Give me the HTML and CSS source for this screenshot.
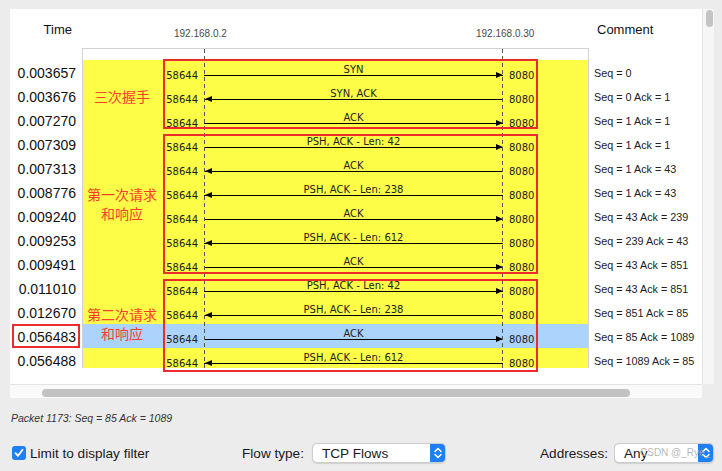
FILE: index.html
```html
<!DOCTYPE html>
<html>
<head>
<meta charset="utf-8">
<link rel="stylesheet" href="styles.css">
</head>
<body>
<div class="pane">
  <div class="view">
    <div class="col-time">
      <div class="head head-time">Time</div>
      <div class="times">
        <div class="t">0.003657</div>
        <div class="t">0.003676</div>
        <div class="t">0.007270</div>
        <div class="t">0.007309</div>
        <div class="t">0.007313</div>
        <div class="t">0.008776</div>
        <div class="t">0.009240</div>
        <div class="t">0.009253</div>
        <div class="t">0.009491</div>
        <div class="t">0.011010</div>
        <div class="t">0.012670</div>
        <div class="t">0.056483</div>
        <div class="t">0.056488</div>
      </div>
    </div>
    <div class="col-diagram">
      <div class="head head-ips"><span class="ip ip-a">192.168.0.2</span><span class="ip">192.168.0.30</span></div>
      <div class="canvas">
        <div class="node node-a"></div>
        <div class="node node-b"></div>
        <div class="row"><span class="port">58644</span><div class="msg"><span class="lbl">SYN</span><div class="arrow to-right"></div></div><span class="port port-r">8080</span></div>
        <div class="row"><span class="port">58644</span><div class="msg"><span class="lbl">SYN, ACK</span><div class="arrow to-left"></div></div><span class="port port-r">8080</span></div>
        <div class="row"><span class="port">58644</span><div class="msg"><span class="lbl">ACK</span><div class="arrow to-right"></div></div><span class="port port-r">8080</span></div>
        <div class="row"><span class="port">58644</span><div class="msg"><span class="lbl">PSH, ACK - Len: 42</span><div class="arrow to-right"></div></div><span class="port port-r">8080</span></div>
        <div class="row"><span class="port">58644</span><div class="msg"><span class="lbl">ACK</span><div class="arrow to-left"></div></div><span class="port port-r">8080</span></div>
        <div class="row"><span class="port">58644</span><div class="msg"><span class="lbl">PSH, ACK - Len: 238</span><div class="arrow to-left"></div></div><span class="port port-r">8080</span></div>
        <div class="row"><span class="port">58644</span><div class="msg"><span class="lbl">ACK</span><div class="arrow to-right"></div></div><span class="port port-r">8080</span></div>
        <div class="row"><span class="port">58644</span><div class="msg"><span class="lbl">PSH, ACK - Len: 612</span><div class="arrow to-left"></div></div><span class="port port-r">8080</span></div>
        <div class="row"><span class="port">58644</span><div class="msg"><span class="lbl">ACK</span><div class="arrow to-right"></div></div><span class="port port-r">8080</span></div>
        <div class="row"><span class="port">58644</span><div class="msg"><span class="lbl">PSH, ACK - Len: 42</span><div class="arrow to-right"></div></div><span class="port port-r">8080</span></div>
        <div class="row"><span class="port">58644</span><div class="msg"><span class="lbl">PSH, ACK - Len: 238</span><div class="arrow to-left"></div></div><span class="port port-r">8080</span></div>
        <div class="row row-sel"><span class="port">58644</span><div class="msg"><span class="lbl">ACK</span><div class="arrow to-right"></div></div><span class="port port-r">8080</span></div>
        <div class="row"><span class="port">58644</span><div class="msg"><span class="lbl">PSH, ACK - Len: 612</span><div class="arrow to-left"></div></div><span class="port port-r">8080</span></div>
      </div>
    </div>
    <div class="col-comment">
      <div class="head head-comment">Comment</div>
      <div class="comments">
        <div class="c">Seq = 0</div>
        <div class="c">Seq = 0 Ack = 1</div>
        <div class="c">Seq = 1 Ack = 1</div>
        <div class="c">Seq = 1 Ack = 1</div>
        <div class="c">Seq = 1 Ack = 43</div>
        <div class="c">Seq = 1 Ack = 43</div>
        <div class="c">Seq = 43 Ack = 239</div>
        <div class="c">Seq = 239 Ack = 43</div>
        <div class="c">Seq = 43 Ack = 851</div>
        <div class="c">Seq = 43 Ack = 851</div>
        <div class="c">Seq = 851 Ack = 85</div>
        <div class="c">Seq = 85 Ack = 1089</div>
        <div class="c">Seq = 1089 Ack = 85</div>
      </div>
    </div>
  </div>
  <div class="vscroll"><div class="vthumb"></div></div>
  <div class="hscroll"><div class="hthumb"></div></div>
</div>

<div class="info">Packet 1173: Seq = 85 Ack = 1089</div>

<div class="controls">
  <div class="filter">
    <span class="checkbox"><svg width="14" height="14" viewBox="0 0 14 14"><path d="M3.5 7.2 L6 9.8 L10.6 3.8" fill="none" stroke="#fff" stroke-width="1.8" stroke-linecap="round" stroke-linejoin="round"/></svg></span>
    <span class="ctl-label">Limit to display filter</span>
  </div>
  <span class="ctl-label flow-label">Flow type:</span>
  <div class="select select-flow"><span class="sel-text">TCP Flows</span><span class="stepper"><svg width="16" height="20" viewBox="0 0 16 20"><path d="M5 8.5 L8 5.5 L11 8.5 M5 11.5 L8 14.5 L11 11.5" fill="none" stroke="#fff" stroke-width="1.5" stroke-linecap="round" stroke-linejoin="round"/></svg></span></div>
  <span class="ctl-label addr-label">Addresses:</span>
  <div class="select select-addr"><span class="sel-text">Any</span><span class="stepper"><svg width="16" height="20" viewBox="0 0 16 20"><path d="M5 8.5 L8 5.5 L11 8.5 M5 11.5 L8 14.5 L11 11.5" fill="none" stroke="#fff" stroke-width="1.5" stroke-linecap="round" stroke-linejoin="round"/></svg></span></div>
</div>

<div class="mark box-1"></div>
<div class="mark box-2"></div>
<div class="mark box-3"></div>
<div class="mark box-time"></div>
<div class="note note-1">三次握手</div>
<div class="note note-2">第一次请求<br>和响应</div>
<div class="note note-3">第二次请求<br>和响应</div>
<div class="watermark">CSDN @_Rye_</div>
</body>
</html>
```

FILE: styles.css
```css
html, body {
  margin: 0;
  padding: 0;
}
body {
  width: 722px;
  height: 471px;
  overflow: hidden;
  position: relative;
  background: #ececec;
  font-family: "Liberation Sans", Arial, sans-serif;
  color: #111;
}

.pane {
  margin: 9px 0 0 10px;
  display: grid;
  grid-template-columns: 692px 12px;
  grid-template-rows: 375px 14px;
}

.view {
  background: #fff;
  display: grid;
  grid-template-columns: 72px 507px 113px;
  overflow: hidden;
}

.head {
  height: 39px;
  box-sizing: border-box;
}
.head-time {
  font-size: 13px;
  line-height: 15px;
  padding-top: 13px;
  text-align: right;
  padding-right: 10px;
}
.head-comment {
  font-size: 13px;
  line-height: 15px;
  padding-top: 13px;
  padding-left: 8px;
}
.head-ips {
  display: flex;
  padding-left: 92px;
  padding-top: 19px;
  font-size: 10px;
  line-height: 12px;
  color: #4a4a4a;
  white-space: nowrap;
}
.ip-a {
  width: 302px;
  flex: none;
}

.times {
  padding-top: 13px;
}
.t {
  height: 24px;
  line-height: 24px;
  font-size: 14px;
  text-align: right;
  padding-right: 6px;
}

.comments {
  padding-top: 13px;
}
.c {
  height: 24px;
  line-height: 24px;
  font-size: 10.8px;
  padding-left: 5px;
  color: #222;
  white-space: nowrap;
}

.canvas {
  position: relative;
  height: 320px;
  box-sizing: border-box;
  border: 1px solid #d2d2d2;
  border-bottom: none;
  padding-top: 11px;
  overflow: hidden;
  font-family: "DejaVu Sans", Verdana, sans-serif;
  color: #222;
}
.node {
  position: absolute;
  top: 0;
  bottom: 0;
  width: 1px;
  background: repeating-linear-gradient(to bottom, #555 0 4px, transparent 4px 7px);
  z-index: 2;
}
.node-a { left: 121px; }
.node-b { left: 419px; }

.row {
  height: 24px;
  background: #fdfd47;
  display: grid;
  grid-template-columns: 115px 299px auto;
  column-gap: 6px;
}
.row-sel {
  background: #abd3fb;
}
.port {
  font-size: 10px;
  line-height: 13px;
  padding-top: 9px;
}
.port:first-child {
  text-align: right;
}
.msg {
  position: relative;
}
.lbl {
  display: block;
  text-align: center;
  font-size: 10px;
  line-height: 12px;
  padding-top: 4px;
  white-space: nowrap;
}
.arrow {
  position: absolute;
  left: 0;
  right: 0;
  top: 15px;
  height: 1px;
  background: #000;
}
.arrow::after {
  content: "";
  position: absolute;
  top: -3px;
  border-top: 3.5px solid transparent;
  border-bottom: 3.5px solid transparent;
}
.arrow.to-right::after {
  right: 0;
  border-left: 7px solid #000;
}
.arrow.to-left::after {
  left: 1px;
  border-right: 7px solid #000;
}

.vscroll {
  background: #f6f6f6;
  border-left: 1px solid #e6e6e6;
  position: relative;
}
.vthumb {
  position: absolute;
  left: 3px;
  top: 1px;
  width: 7px;
  height: 17px;
  border-radius: 4px;
  background: #c4c4c4;
}
.hscroll {
  background: #fafafa;
  border-top: 1px solid #e4e4e4;
  box-sizing: border-box;
  padding: 4px 0 0 32px;
}
.hthumb {
  width: 588px;
  height: 8px;
  border-radius: 4px;
  background: #c2c2c2;
}

.info {
  margin-top: 13px;
  padding-left: 11px;
  font-style: italic;
  font-size: 10.5px;
  line-height: 14px;
  color: #333;
}

.controls {
  margin-top: 18px;
  height: 20px;
  display: flex;
  align-items: center;
  padding-left: 12px;
  font-size: 13.6px;
  color: #1a1a1a;
}
.filter {
  width: 230px;
  display: flex;
  align-items: center;
}
.checkbox {
  width: 14px;
  height: 14px;
  border-radius: 3px;
  background: #1f80f6;
  margin-right: 4px;
  display: flex;
}
.flow-label {
  width: 70px;
}
.addr-label {
  margin-left: 94px;
  width: 74px;
}
.select {
  height: 20px;
  box-sizing: border-box;
  background: #fff;
  border: 1px solid #cdcdcd;
  border-radius: 5px;
  display: flex;
  align-items: center;
  box-shadow: 0 0.5px 1px rgba(0,0,0,0.12);
  overflow: hidden;
}
.select-flow { width: 134px; }
.select-addr { width: 100px; }
.sel-text {
  flex: 1;
  padding-left: 9px;
}
.stepper {
  width: 16px;
  height: 20px;
  background: #1f80f6;
  display: flex;
  margin-right: -1px;
}

.mark {
  position: absolute;
  border: 2px solid #ee2b2b;
  box-sizing: border-box;
  z-index: 5;
}
.box-1 { left: 163px; top: 59px; width: 375px; height: 70px; }
.box-2 { left: 163px; top: 134px; width: 375px; height: 140px; }
.box-3 { left: 163px; top: 279px; width: 375px; height: 93px; }
.box-time { left: 12px; top: 324px; width: 68px; height: 24px; }

.note {
  position: absolute;
  left: 82px;
  width: 80px;
  text-align: center;
  font-family: "Noto Sans CJK SC", "Noto Sans", sans-serif;
  font-size: 14px;
  line-height: 19px;
  color: #ff3d2e;
  z-index: 4;
}
.note-1 { top: 87px; }
.note-2 { top: 185px; }
.note-3 { top: 305px; }

.watermark {
  position: absolute;
  left: 640px;
  top: 446px;
  font-size: 10px;
  line-height: 14px;
  color: rgba(170,170,170,0.85);
  z-index: 6;
  white-space: nowrap;
}
```
